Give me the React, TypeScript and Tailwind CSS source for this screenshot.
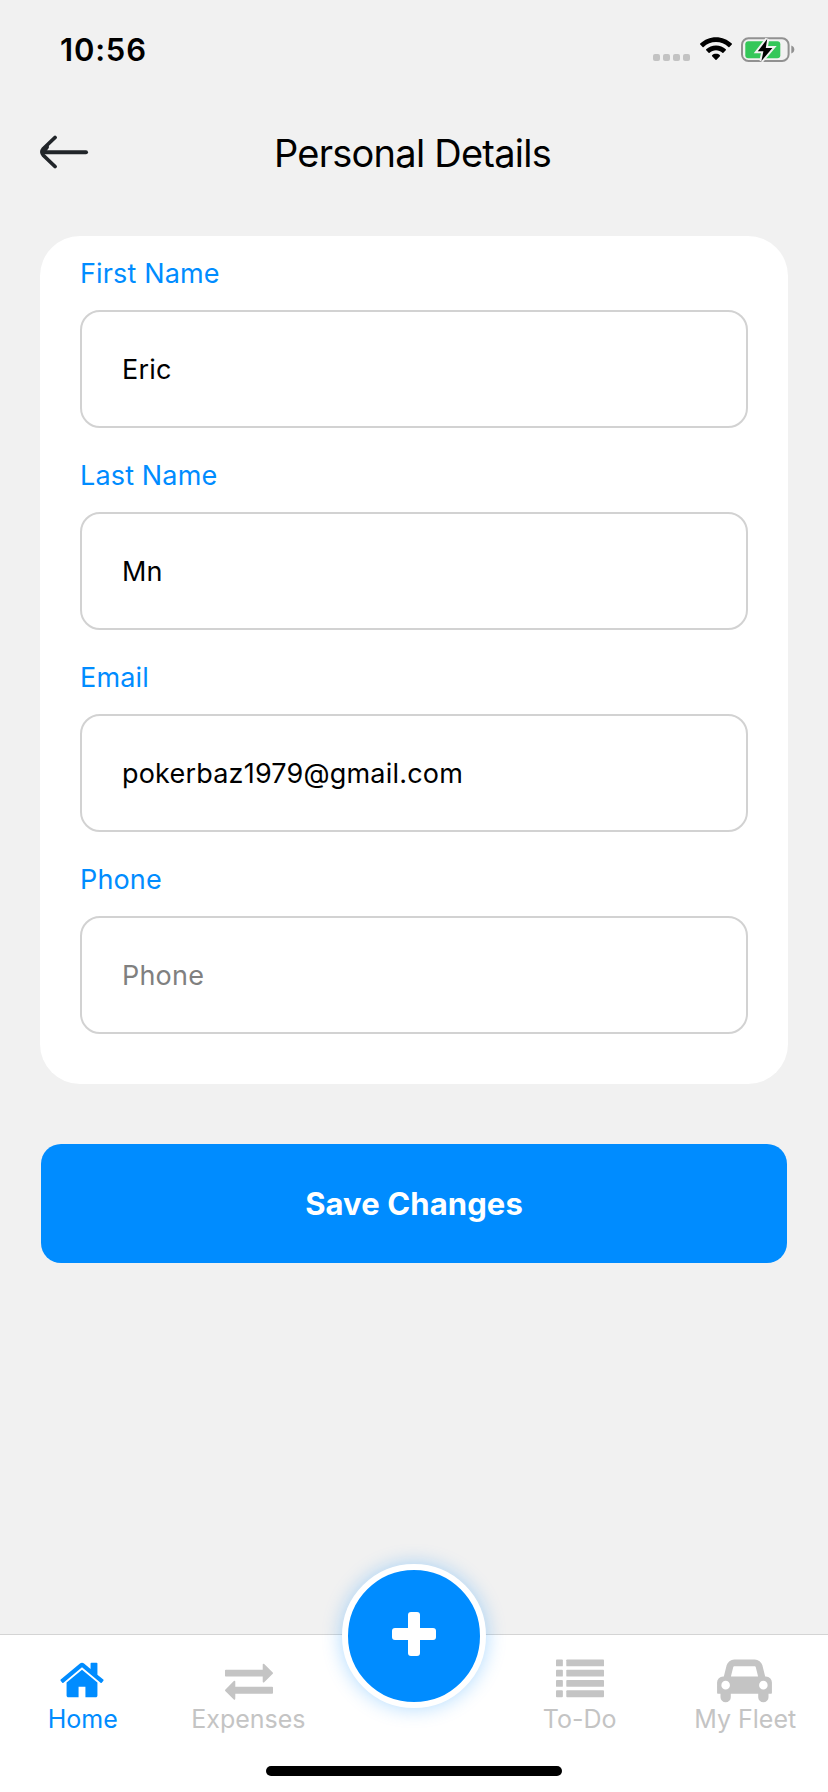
import React from "react";

const HOME =
  "M1472 992v480q0 26-19 45t-45 19h-384v-384h-256v384h-384q-26 0-45-19t-19-45v-480q0-1 .5-3t.5-3l575-474 575 474q1 2 1 6zm223-69l-62 74q-8 9-21 11h-3q-13 0-21-7l-692-577-692 577q-12 8-24 7-13-2-21-11l-62-74q-8-10-7-23.5t11-21.5l719-599q32-26 76-26t76 26l244 204v-195q0-14 9-23t23-9h192q14 0 23 9t9 23v408l219 182q10 8 11 21.5t-7 23.5z";
const EXCHANGE =
  "M1792 1184v192q0 13-9.5 22.5t-22.5 9.5h-1376v192q0 13-9.5 22.5t-22.5 9.5q-12 0-24-10l-319-320q-9-9-9-22 0-14 9-23l320-320q9-9 23-9 13 0 22.5 9.5t9.5 22.5v192h1376q13 0 22.5 9.5t9.5 22.5zm0-544q0 14-9 23l-320 320q-9 9-23 9-13 0-22.5-9.5t-9.5-22.5v-192h-1376q-13 0-22.5-9.5t-9.5-22.5v-192q0-13 9.5-22.5t22.5-9.5h1376v-192q0-14 9-23t23-9q12 0 24 10l319 319q9 9 9 23z";
const CAR =
  "M480 1088q0-66-47-113t-113-47-113 47-47 113 47 113 113 47 113-47 47-113zm36-320h1016l-89-357q-2-8-14-17.5t-21-9.5h-768q-9 0-21 9.5t-14 17.5zm1372 320q0-66-47-113t-113-47-113 47-47 113 47 113 113 47 113-47 47-113zm160-96v384q0 14-9 23t-23 9h-96v128q0 80-56 136t-136 56-136-56-56-136v-128h-1024v128q0 80-56 136t-136 56-136-56-56-136v-128h-96q-14 0-23-9t-9-23v-384q0-93 65.5-158.5t158.5-65.5h28l105-419q23-94 104-157.5t179-63.5h768q98 0 179 63.5t104 157.5l105 419h28q93 0 158.5 65.5t65.5 158.5z";

function StatusBar() {
  return (
    <header className="flex h-[98px] items-start justify-between pl-[60px] pr-[33px]">
      <span className="mt-[31px] text-[31px] leading-[38px] font-semibold tracking-[0.8px]">10:56</span>
      <div className="mt-[36px] flex h-[27px] items-end">
        <div className="mb-[2px] flex gap-[3px]">
          {[0, 1, 2, 3].map((i) => (
            <span key={i} className="size-[7px] rounded-[2px] bg-[#c3c3c3]" />
          ))}
        </div>
        <svg className="ml-[9px] h-[27px] w-[34px]" viewBox="0 0 34 27">
          <path
            fill="#000"
            d="M17 1.2c6 0 11.600 2.400 15.800 6.300.3.300.3.700 0 1l-2.400 2.400c-.3.300-.700.300-1 0C26 7.700 21.700 5.900 17 5.900S8 7.700 4.600 10.900c-.3.300-.700.300-1 0L1.200 8.500c-.3-.3-.3-.7 0-1C5.400 3.600 11 1.200 17 1.200z"
          />
          <path
            fill="#000"
            d="M17 9.500c3.800 0 7.200 1.400 9.800 3.800.3.300.3.700 0 1l-2.400 2.400c-.3.300-.7.300-1 0-1.700-1.500-4-2.500-6.400-2.500s-4.700 1-6.400 2.500c-.3.300-.7.300-1 0l-2.400-2.400c-.3-.3-.3-.7 0-1 2.600-2.400 6-3.800 9.800-3.800z"
          />
          <path
            fill="#000"
            d="M17 17.800c1.500 0 2.900.5 3.900 1.400.3.300.3.700 0 1l-3.400 3.500c-.3.300-.7.300-1 0l-3.400-3.500c-.3-.3-.3-.7 0-1 1-.9 2.400-1.400 3.900-1.400z"
          />
        </svg>
        <svg className="ml-[8px] h-[27px] w-[54px]" viewBox="0 0 54 27">
          <rect x="1" y="2.300" width="46.600" height="22.600" rx="6.500" fill="none" stroke="#919191" strokeWidth="2" />
          <path d="M50.300 9.500c2 .7 3 2.200 3 4s-1 3.300-3 4z" fill="#919191" />
          <rect x="4.300" y="5.200" width="35" height="17" rx="3" fill="#34c759" />
          <path
            d="M26.200 3L16.800 15.200h5.600L20.400 25 31.400 11.900h-6.600z"
            fill="#000"
            stroke="#f1f1f1"
            strokeWidth="4"
            paintOrder="stroke"
          />
        </svg>
      </div>
    </header>
  );
}

function Field({ label, value, placeholder = false }: { label: string; value: string; placeholder?: boolean }) {
  return (
    <div className="mb-[26px] flex flex-col">
      <label className="h-[58px] pt-[6px] text-[27px] leading-[32px] tracking-[0.15px] text-[#008cff]">{label}</label>
      <div
        className={`flex h-[118px] items-center rounded-[20px] border-2 border-[#d2d2d2] pt-[2px] pl-[40px] text-[27px] leading-[32px] tracking-[0.2px] ${
          placeholder ? "text-[#808080]" : "text-black"
        }`}
      >
        {value}
      </div>
    </div>
  );
}

function Tab({ label, active = false, children }: { label: string; active?: boolean; children: React.ReactNode }) {
  return (
    <div className={`flex flex-1 flex-col items-center pt-[21px] ${active ? "text-[#008cff]" : "text-[#c4c4c4]"}`}>
      {children}
      <span className="text-[25px] leading-[30px] whitespace-nowrap">{label}</span>
    </div>
  );
}

export default function App() {
  return (
    <div
      className="flex h-[1792px] w-[828px] flex-col overflow-hidden bg-[#f1f1f1] text-black"
      style={{ fontFamily: 'Inter, "Liberation Sans", sans-serif' }}
    >
      <StatusBar />
      <div className="grid h-[138px] grid-cols-[1fr_auto_1fr] items-start pt-[32px] pr-[41px] pl-[38px]">
        <svg className="mt-[3px] h-[38px] w-[52px]" viewBox="0 0 52 38" fill="none" stroke="#212529" strokeLinecap="round" strokeLinejoin="round">
          <path d="M5 19.300H48" strokeWidth="4" />
          <path d="M17 4.500L5.500 15.500Q2.500 19.200 5.500 22.500L17 33.500" strokeWidth="3.800" />
          <path d="M5 19.300L9 14" strokeWidth="4" />
        </svg>
        <h1 className="text-[38px] leading-[46px] tracking-[-0.75px]">Personal Details</h1>
      </div>

      <main className="mx-[40px] flex flex-col rounded-[40px] bg-white px-[40px] pt-[16px] pb-[24px]">
        <Field label="First Name" value="Eric" />
        <Field label="Last Name" value="Mn" />
        <Field label="Email" value="pokerbaz1979@gmail.com" />
        <Field label="Phone" value="Phone" placeholder />
      </main>

      <button className="mx-[41px] mt-[60px] h-[119px] shrink-0 rounded-[20px] bg-[#008cff] pt-[2px] text-[31px] font-bold tracking-[0.1px] text-white">
        Save Changes
      </button>

      <nav className="relative mt-auto flex h-[158px] shrink-0 flex-col border-t border-[#d4d4d4] bg-white">
        <div className="flex">
          <Tab label="Home" active>
            <svg className="mr-[1px] h-[48px] w-[48px]" viewBox="0 0 1792 1792" fill="currentColor">
              <path d={HOME} />
            </svg>
          </Tab>
          <Tab label="Expenses">
            <svg className="ml-[1px] h-[48px] w-[48px]" viewBox="0 0 1792 1792" fill="currentColor">
              <path d={EXCHANGE} />
            </svg>
          </Tab>
          <div className="flex-1" />
          <Tab label="To-Do">
            <svg className="ml-[1px] h-[48px] w-[48px]" viewBox="0 0 1792 1792" fill="currentColor">
              {[128, 512, 896, 1280].map((y) => (
                <g key={y}>
                  <rect x="0" y={y} width="256" height="256" rx="32" />
                  <rect x="384" y={y} width="1408" height="256" rx="32" />
                </g>
              ))}
            </svg>
          </Tab>
          <Tab label="My Fleet">
            <svg className="mr-[1px] h-[48px] w-[55px]" viewBox="0 0 2048 1792" fill="currentColor">
              <path d={CAR} />
            </svg>
          </Tab>
        </div>
        <div className="mx-auto mt-auto mb-[16px] h-[10px] w-[296px] rounded-full bg-black" />
        <button className="absolute -top-[71px] left-[342px] flex size-[144px] items-center justify-center rounded-full border-[6px] border-white bg-[#008cff] shadow-[0_0_20px_rgba(0,140,255,0.33)]">
          <svg className="-mt-[4px] h-[44px] w-[44px]" viewBox="0 0 44 44" fill="#fff">
            <rect x="16" y="0" width="12" height="44" rx="3" />
            <rect x="0" y="16" width="44" height="12" rx="3" />
          </svg>
        </button>
      </nav>
    </div>
  );
}
